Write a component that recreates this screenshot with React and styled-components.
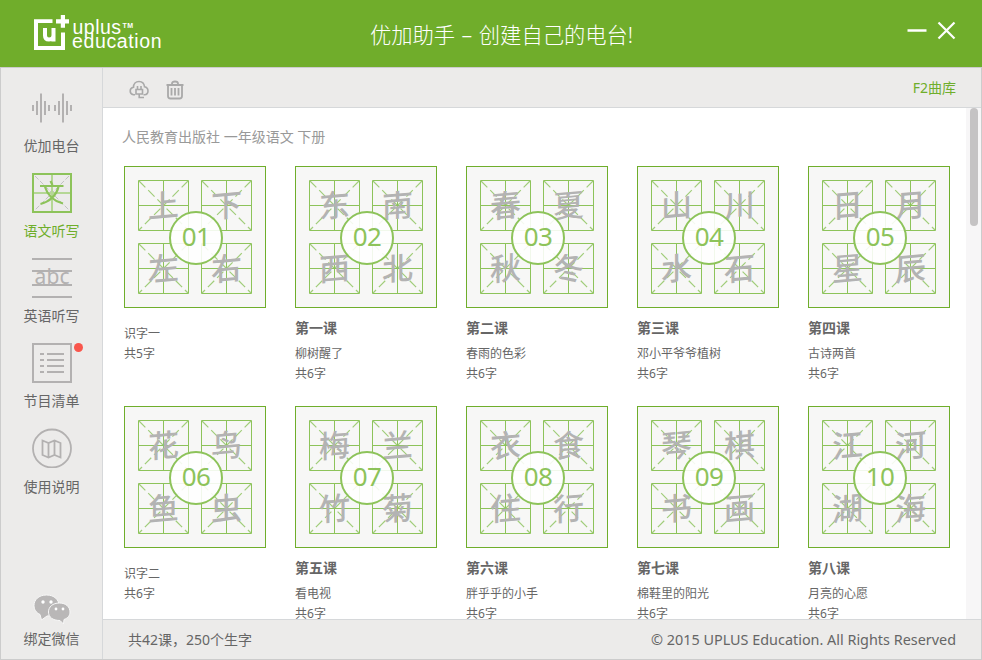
import React from 'react';
import styled, { createGlobalStyle } from 'styled-components';

const GlobalStyle = createGlobalStyle`
    * {
        box-sizing: border-box;
    }
    body {
        margin: 0;
        font-family: "Noto Sans", "Noto Sans CJK SC", sans-serif;
        color: #666;
    }
`
const Window = styled.div`
    width: 982px;
    height: 660px;
    display: flex;
    flex-direction: column;
    overflow: hidden;
    background: #fff;
`
const Header = styled.header`
    height: 67px;
    flex: none;
    display: grid;
    grid-template-columns: 1fr auto 1fr;
    background: #70ad2b;
`
const Logo = styled.svg`
    display: block;
    width: 140px;
    height: 44px;
    margin: 11px 0 0 30px;
`
const Title = styled.h1`
    margin: 0;
    padding: 2px 0 0 21px;
    font-size: 21.3px;
    font-weight: 300;
    line-height: 66px;
    word-spacing: 1px;
    color: #fff;
    white-space: pre;
`
const WindowButtons = styled.div`
    display: flex;
    justify-content: flex-end;
    gap: 10px;
    padding: 21px 25px 0 0;
`
const WindowButton = styled.button`
    width: 20px;
    height: 20px;
    padding: 0;
    border: 0;
    background: none;

    svg {
        display: block;
    }
`
const Body = styled.div`
    flex: 1;
    min-height: 0;
    display: flex;
    border: 1px solid #ccc;
`
const Sidebar = styled.nav`
    width: 102px;
    flex: none;
    display: flex;
    flex-direction: column;
    justify-content: space-between;
    padding: 20px 0 10px;
    background: #ecebea;
    border-right: 1px solid #d6d8da;
`
const NavList = styled.div`
    display: flex;
    flex-direction: column;
    gap: 25px;
`
const NavItem = styled.div`
    position: relative;
    display: flex;
    flex-direction: column;
    align-items: center;
    color: ${props => props.$active ? '#6fae2b' : '#666'};

    svg {
        display: block;
    }
`
const NavLabel = styled.span`
    height: 20px;
    margin-top: ${props => props.$gap || 8}px;
    margin-bottom: ${props => props.$last ? '0' : '-8px'};
    font-size: 14px;
    line-height: 20px;
`
const Badge = styled.i`
    position: absolute;
    top: 0;
    right: 19.5px;
    width: 9px;
    height: 9px;
    border-radius: 50%;
    background: #f9564c;
`
const Main = styled.main`
    flex: 1;
    min-width: 0;
    display: flex;
    flex-direction: column;
`
const Toolbar = styled.div`
    height: 40px;
    flex: none;
    display: flex;
    align-items: center;
    gap: 16px;
    padding: 4px 25px 0 25px;
    background: #ecebea;
    border-bottom: 1px solid #d6d8da;
`
const LibraryLink = styled.span`
    margin-left: auto;
    padding-bottom: 4px;
    font-size: 14px;
    line-height: 20px;
    color: #6fae2b;
`
const Content = styled.div`
    flex: 1;
    min-height: 0;
    display: flex;
    overflow: hidden;
`
const Lessons = styled.section`
    flex: 1;
    padding: 19px 0 0 21px;
`
const BookTitle = styled.h2`
    margin: 0 0 19px -2px;
    font-size: 14px;
    font-weight: 400;
    line-height: 20px;
    color: #999;
`
const Grid = styled.div`
    display: grid;
    grid-template-columns: repeat(5, 142px);
    grid-auto-rows: 240px;
    column-gap: 29px;
`
const Cover = styled.div`
    position: relative;
    width: 142px;
    height: 142px;
    display: grid;
    grid-template-columns: 51px 51px;
    grid-template-rows: 51px 51px;
    gap: 12px;
    padding: 13px;
    background: #f7f7f6;
    border: 1px solid #6fae2b;
`
const Square = styled.div`
    position: relative;

    svg {
        display: block;
    }
`
const Glyph = styled.span`
    position: absolute;
    inset: 0;
    font-family: "Noto Sans CJK SC", sans-serif;
    font-size: 31px;
    font-weight: 500;
    line-height: 47px;
    text-align: center;
    color: #b3b3b3;
    transform: skewY(-5deg);
`
const Num = styled.div`
    position: absolute;
    left: 44px;
    top: 44px;
    width: 54px;
    height: 54px;
    border: 2px solid #8dc35a;
    border-radius: 50%;
    background: rgba(255, 255, 255, 0.88);
    font-size: 26px;
    line-height: 47px;
    letter-spacing: -0.5px;
    text-align: center;
    color: #8dc35a;
`
const Info = styled.div`
    padding-top: ${props => props.$untitled ? '16px' : '10px'};
    font-size: 12px;
    line-height: 20px;
`
const LessonName = styled.h3`
    margin: 0 0 6px;
    font-size: 14px;
    font-weight: 700;
    line-height: 20px;
`
const Line = styled.p`
    margin: 0;
    height: 20px;
`
const ScrollTrack = styled.div`
    width: 15px;
    padding-left: 4px;
    background: #f7f6f7;
`
const ScrollThumb = styled.div`
    width: 8px;
    height: 118px;
    border-radius: 4px;
    background: #c5c3c4;
`
const Footer = styled.footer`
    height: 40px;
    flex: none;
    display: flex;
    justify-content: space-between;
    padding: 0 25px;
    background: #ecebea;
    border-top: 1px solid #d6d8da;
    font-size: 14px;
    line-height: 39px;
`
const Copyright = styled.span`
    font-size: 14.4px;
`

const lessons = [
    { chars: '上下左右', text: '识字一', count: 5 },
    { chars: '东南西北', name: '第一课', text: '柳树醒了', count: 6 },
    { chars: '春夏秋冬', name: '第二课', text: '春雨的色彩', count: 6 },
    { chars: '山川水石', name: '第三课', text: '邓小平爷爷植树', count: 6 },
    { chars: '日月星辰', name: '第四课', text: '古诗两首', count: 6 },
    { chars: '花鸟鱼虫', text: '识字二', count: 6 },
    { chars: '梅兰竹菊', name: '第五课', text: '看电视', count: 6 },
    { chars: '衣食住行', name: '第六课', text: '胖乎乎的小手', count: 6 },
    { chars: '琴棋书画', name: '第七课', text: '棉鞋里的阳光', count: 6 },
    { chars: '江河湖海', name: '第八课', text: '月亮的心愿', count: 6 },
]

const bars = [[1, 6], [5, 14], [9, 29], [13, 14], [17, 6], [23, 6], [27, 14], [31, 29], [35, 14], [39, 6]]

const RadioIcon = () => (
    <svg width="40" height="40" stroke="#b3b1b1" strokeWidth="2">
        {bars.map(([x, h]) => <path key={x} d={`M${x} ${20 - h / 2}v${h}`} />)}
    </svg>
)

const ChineseIcon = () => (
    <svg width="40" height="40" fill="none">
        <path d="M3 3L37 37M37 3L3 37" stroke="#c2c2c2" strokeDasharray="5 2" />
        <path d="M20 2V38M2 20H38" stroke="#b5d795" strokeWidth="2" />
        <rect x="1" y="1" width="38" height="38" stroke="#8dc35a" strokeWidth="2" />
        <path d="M18.500 8L20.500 12M8 13H31.500M13 14Q17 27 31 30.500M26.500 14Q23 27 8.500 31" stroke="#8dc35a" strokeWidth="2.200" />
    </svg>
)

const EnglishIcon = () => (
    <svg width="40" height="40">
        <path d="M0 1H40M0 13H40M0 27H40M0 39H40" stroke="#b3b1b1" strokeWidth="2" />
        <text x="2.500" y="25.500" fontSize="21" textLength="35" fill="#b3b1b1">abc</text>
    </svg>
)

const ListIcon = () => (
    <svg width="40" height="40" fill="none" stroke="#b3b1b1" strokeWidth="2">
        <rect x="1" y="1" width="38" height="38" />
        <path d="M8 11h4M15 11h17M8 17h4M15 17h17M8 23h4M15 23h17M8 29h4M15 29h17" />
    </svg>
)

const MapIcon = () => (
    <svg width="40" height="40" fill="none" stroke="#b3b1b1" strokeWidth="1.800">
        <circle cx="20" cy="20.500" r="19" />
        <path d="M10.500 12.500L16.500 15L22.500 12.500L28.500 15V29.500L22.500 27L16.500 29.500L10.500 27ZM16.500 15V29.500M22.500 12.500V27" />
    </svg>
)

const WechatIcon = () => (
    <svg width="40" height="34" fill="#b9b7b7" stroke="#f8f8f8">
        <path d="M14.500 2C6.500 2 2 7 2 12.500C2 16.500 4 19.500 8 21.500L9.500 27L15 23C24 23 27 18 27 12.500C27 7 22.500 2 14.500 2Z" />
        <path d="M27.500 10C20.500 10 16.500 14 16.500 19C16.500 24 20.500 27.500 28 27.500L31.500 31L32 26.500C36 25 38 22.500 38 19C38 14 34 10 27.500 10Z" />
        <g fill="#fff" stroke="none">
            <circle cx="11" cy="9" r="1.700" />
            <circle cx="19" cy="9" r="1.700" />
            <circle cx="24" cy="16" r="1.400" />
            <circle cx="31" cy="16" r="1.400" />
        </g>
    </svg>
)

const CloudIcon = () => (
    <svg width="22" height="20" viewBox="0 0 22 20" fill="none" stroke="#a9a9a9" strokeWidth="1.600">
        <path d="M7 14.800H5.500C3.300 14.300 2.200 12.700 2.200 11C2.200 9 3.600 7.500 5.500 7.200C5.500 3.800 7.800 1.500 11 1.500C14 1.500 16.200 3.500 16.500 6.800C18.600 7.200 20 9 20 11C20 13 18.600 14.600 16.500 14.800H15.500" />
        <path d="M8 9.500H14.500V14H8ZM9.500 9.500V6M13 9.500V6M11.200 14V17.500H16" />
    </svg>
)

const TrashIcon = () => (
    <svg width="18" height="20" viewBox="0 0 18 20" fill="none" stroke="#a9a9a9" strokeWidth="1.800">
        <path d="M0.500 5H17.500M6 4.500V3.500Q6 1.500 9 1.500Q12 1.500 12 3.500V4.500M2 5V16Q2 18.500 4.500 18.500H13.500Q16 18.500 16 16V5M5.500 8V15.500M9 8V15.500M12.500 8V15.500" />
    </svg>
)

const Tianzige = () => (
    <svg width="51" height="51" fill="none">
        <path d="M1 1L50 50M50 1L1 50" stroke="#a1cd7a" strokeWidth="1.200" strokeDasharray="9 4" />
        <path d="M0.500 0.500H50.500V50.500H0.500ZM25.500 0V51M0 25.500H51" stroke="#8dc35a" />
    </svg>
)

function Lesson({ lesson, index }) {
    return (
        <article>
            <Cover>
                {lesson.chars.split('').map(char => (
                    <Square key={char}>
                        <Tianzige />
                        <Glyph>{char}</Glyph>
                    </Square>
                ))}
                <Num>{String(index + 1).padStart(2, '0')}</Num>
            </Cover>
            <Info $untitled={!lesson.name}>
                {lesson.name && <LessonName>{lesson.name}</LessonName>}
                <Line>{lesson.text}</Line>
                <Line>共{lesson.count}字</Line>
            </Info>
        </article>
    )
}

const navItems = [
    { label: '优加电台', icon: <RadioIcon /> },
    { label: '语文听写', icon: <ChineseIcon />, active: true },
    { label: '英语听写', icon: <EnglishIcon /> },
    { label: '节目清单', icon: <ListIcon />, badge: true },
    { label: '使用说明', icon: <MapIcon />, gap: 9 },
]

function App() {
    return (
        <Window>
            <GlobalStyle />
            <Header>
                <Logo viewBox="30 11 140 44" fill="#fff">
                    <path d="M34 19.300H52.500V23H38V46H61V32.500H65V50H34Z" />
                    <path d="M60.800 15H65V19.300H69V23.500H65V27.700H60.800V23.500H56V19.300H60.800Z" />
                    <path d="M45 28V35.500Q45 39.500 49 39.500Q53.500 39.500 53.500 35V28M53.500 34V41.500" fill="none" stroke="#fff" strokeWidth="4" />
                    <g fontFamily="Liberation Sans, sans-serif">
                        <text x="72.500" y="34" fontSize="19.500" textLength="48.500">uplus</text>
                        <text x="122.500" y="28" fontSize="7" fontWeight="700" textLength="10.500">TM</text>
                        <text x="72" y="47.500" fontSize="19.500" textLength="89.500">education</text>
                    </g>
                </Logo>
                <Title>优加助手 – 创建自己的电台!</Title>
                <WindowButtons>
                    <WindowButton aria-label="minimize">
                        <svg width="20" height="20" stroke="#fff" strokeWidth="2.500"><path d="M0.500 9.500H19.500" /></svg>
                    </WindowButton>
                    <WindowButton aria-label="close">
                        <svg width="20" height="20" stroke="#fff" strokeWidth="2.200"><path d="M1.500 1.500L17.500 17.500M17.500 1.500L1.500 17.500" /></svg>
                    </WindowButton>
                </WindowButtons>
            </Header>
            <Body>
                <Sidebar>
                    <NavList>
                        {navItems.map(item => (
                            <NavItem key={item.label} $active={item.active}>
                                {item.icon}
                                {item.badge && <Badge />}
                                <NavLabel $gap={item.gap}>{item.label}</NavLabel>
                            </NavItem>
                        ))}
                    </NavList>
                    <NavItem>
                        <WechatIcon />
                        <NavLabel $gap={2} $last>绑定微信</NavLabel>
                    </NavItem>
                </Sidebar>
                <Main>
                    <Toolbar>
                        <CloudIcon />
                        <TrashIcon />
                        <LibraryLink>F2曲库</LibraryLink>
                    </Toolbar>
                    <Content>
                        <Lessons>
                            <BookTitle>人民教育出版社 一年级语文 下册</BookTitle>
                            <Grid>
                                {lessons.map((lesson, i) => <Lesson key={lesson.chars} lesson={lesson} index={i} />)}
                            </Grid>
                        </Lessons>
                        <ScrollTrack>
                            <ScrollThumb />
                        </ScrollTrack>
                    </Content>
                    <Footer>
                        <span>共42课，250个生字</span>
                        <Copyright>© 2015 UPLUS Education. All Rights Reserved</Copyright>
                    </Footer>
                </Main>
            </Body>
        </Window>
    )
}

export default App;
